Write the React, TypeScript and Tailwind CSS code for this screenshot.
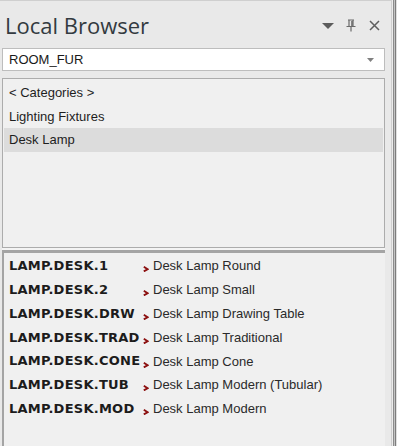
import React from "react";

const categories = ["< Categories >", "Lighting Fixtures", "Desk Lamp"];

const items: [string, string][] = [
  ["LAMP.DESK.1", "Desk Lamp Round"],
  ["LAMP.DESK.2", "Desk Lamp Small"],
  ["LAMP.DESK.DRW", "Desk Lamp Drawing Table"],
  ["LAMP.DESK.TRAD", "Desk Lamp Traditional"],
  ["LAMP.DESK.CONE", "Desk Lamp Cone"],
  ["LAMP.DESK.TUB", "Desk Lamp Modern (Tubular)"],
  ["LAMP.DESK.MOD", "Desk Lamp Modern"],
];

function Chevron() {
  return (
    <svg width="6" height="6" viewBox="0 0 6 6" className="shrink-0">
      <path d="M0.8 0.8 L4.6 3.2 L0.8 5.4" stroke="#8c1010" strokeWidth="1.9" fill="none" />
    </svg>
  );
}

export default function App() {
  return (
    <div className="flex h-[446px] w-[397px] overflow-hidden bg-[#e9e9e9] font-['Liberation_Sans',sans-serif]">
      <div className="flex min-w-0 flex-1 flex-col border-t border-[#cfcfcf] pl-[2px] pr-[6px]">
        {/* header */}
        <div className="flex h-[47px] shrink-0 items-center justify-between pl-[3px] pr-[5px]">
          <span className="font-['Open_Sans',sans-serif] text-[22px] leading-none text-[#333a40]">Local Browser</span>
          <div className="flex items-center pt-[2px]">
            <svg width="12" height="6" viewBox="0 0 12 6">
              <path d="M0 0 H12 L6 6 Z" fill="#5c5c5c" />
            </svg>
            <svg width="10" height="13" viewBox="0 0 10 13" className="ml-[12px]">
              <path d="M3 1 V7 M7 1 V7 M2 1 H8 M0.5 7.5 H9.5 M5 7.5 V12.5" stroke="#6a6a6a" strokeWidth="1.2" fill="none" />
              <path d="M6 2 V7" stroke="#6a6a6a" strokeWidth="1.6" />
            </svg>
            <svg width="11" height="11" viewBox="0 0 11 11" className="ml-[13px]">
              <path d="M1 1 L10 10 M10 1 L1 10" stroke="#5e5e5e" strokeWidth="1.5" />
            </svg>
          </div>
        </div>

        {/* combo */}
        <div className="flex h-[23px] shrink-0 items-center justify-between border border-[#bdbdbd] bg-white pl-[6px] pr-[10px]">
          <span className="text-[13px] text-[#1a1a1a]">ROOM_FUR</span>
          <svg width="7" height="4" viewBox="0 0 7 4">
            <path d="M0 0 H7 L3.5 4 Z" fill="#808080" />
          </svg>
        </div>

        {/* categories */}
        <div className="mt-[7px] flex h-[170px] shrink-0 flex-col border border-[#acacac] bg-[#f0f0f0] px-[1px] pt-[2px]">
          {categories.map((c, i) => (
            <div
              key={c}
              className={`flex h-[23.5px] items-center pl-[5px] text-[13px] text-[#1e1e1e] ${i === 2 ? "bg-[#dcdcdc]" : ""}`}
            >
              {c}
            </div>
          ))}
        </div>

        {/* splitter */}
        <div className="h-[2px] shrink-0 bg-[#f4f4f4]" />

        {/* items */}
        <div className="flex flex-1 flex-col border-l-2 border-t-[3px] border-[#a4a4a4] bg-[#f0f0f0] pl-[5px] pt-[1px]">
          {items.map(([code, desc]) => (
            <div key={code} className="flex h-[23.8px] items-center">
              <span className="min-w-[134px] font-['DejaVu_Sans',sans-serif] text-[13px] font-bold tracking-[0.25px] text-[#1c1c1c]">
                {code}
              </span>
              <div className="flex items-end gap-[4px]">
                <span className="pb-[1px]">
                  <Chevron />
                </span>
                <span className="text-[13px] leading-[15px] text-[#2a2a2a]">{desc}</span>
              </div>
            </div>
          ))}
        </div>
      </div>

      {/* right frame */}
      <div className="flex h-full w-[6px] shrink-0">
        <div className="w-[1px] bg-[#cfcfcf]" />
        <div className="w-[1px] bg-[#ececec]" />
        <div className="w-[1px] bg-[#8c8c8c]" />
        <div className="w-[1px] bg-[#c4c4c4]" />
        <div className="w-[1px] bg-[#7d7d7d]" />
        <div className="w-[1px] bg-[#e0e0e0]" />
      </div>
    </div>
  );
}
